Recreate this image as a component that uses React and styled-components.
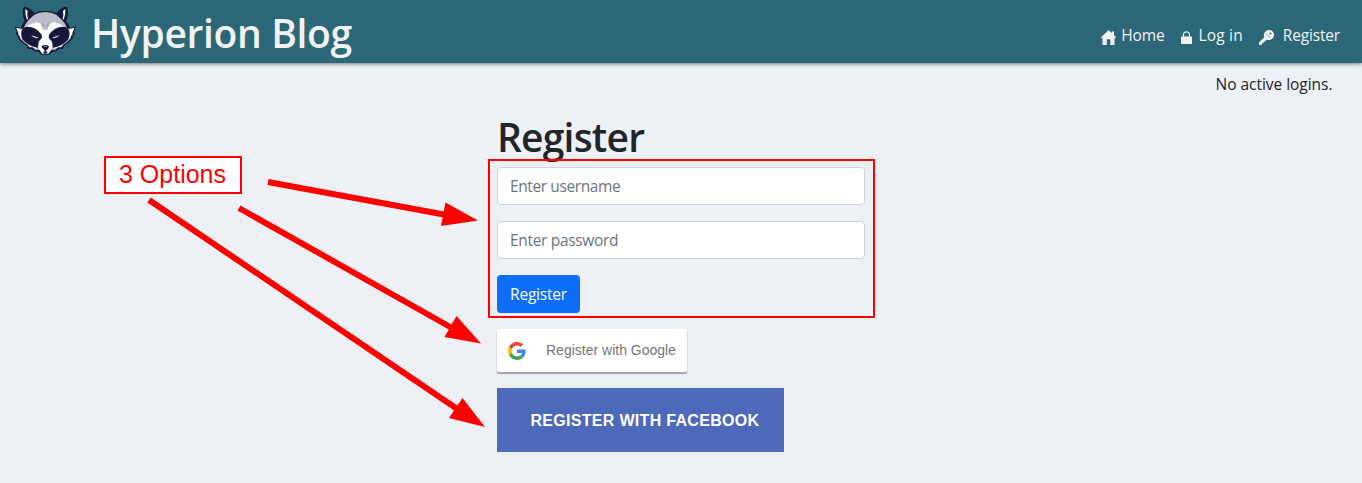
import React from "react";
import styled, { createGlobalStyle } from "styled-components";

const GlobalStyle = createGlobalStyle`
  *, *::before, *::after { box-sizing: border-box; }
  body {
    margin: 0;
    background: #edf0f5;
    color: #212529;
    font-family: "Segoe UI", "Open Sans", "Noto Sans", sans-serif;
    font-size: 15.5px;
    line-height: 24px;
    overflow: hidden;
  }
`;

const Page = styled.div`
  position: relative;
  height: 483px;
`;

const Header = styled.header`
  display: flex;
  align-items: flex-start;
  height: 63px;
  padding-left: 15px;
  background: #2b6777;
  color: #f2f2f2;
  box-shadow: 0 1px 4px rgba(0, 0, 0, 0.5);
`;

const Logo = styled.svg`
  width: 61px;
  height: 49px;
  margin-top: 6px;
`;

const Brand = styled.h1`
  margin: 9px 0 0 15px;
  font-size: 39px;
  font-weight: 600;
  line-height: 48px;
  letter-spacing: -0.35px;
  white-space: nowrap;
`;

const Nav = styled.nav`
  display: flex;
  margin: 23px 22px 0 auto;
`;

const NavLink = styled.a`
  display: flex;
  align-items: center;
  gap: ${(p) => p.$gap}px;
  margin-left: 16px;
  color: #f2f2f2;
  letter-spacing: ${(p) => p.$tracking}px;
  white-space: nowrap;

  svg { flex: none; margin-top: 5px; }
`;

const Status = styled.p`
  margin: 9px 29.5px 0 0;
  text-align: right;
  letter-spacing: -0.03px;
`;

const Main = styled.main`
  width: 368px;
  margin: 17px 0 0 497px;
`;

const Title = styled.h1`
  margin: 0 0 6px;
  font-size: 39px;
  font-weight: 600;
  line-height: 48px;
  letter-spacing: -0.8px;
`;

const Form = styled.form`
  display: flex;
  flex-direction: column;
  align-items: flex-start;
  gap: 16px;
`;

const Input = styled.input`
  width: 100%;
  height: 38px;
  padding: 6px 12px;
  border: 1px solid #ced4da;
  border-radius: 4px;
  background: #fff;
  font: inherit;
  letter-spacing: ${(p) => p.$tracking}px;

  &::placeholder { color: #6c757d; opacity: 1; }
`;

const SubmitButton = styled.button`
  width: 83px;
  height: 38px;
  padding: 0;
  border: 0;
  border-radius: 4px;
  background: #0d6efd;
  color: #fff;
  font: inherit;
  letter-spacing: -0.2px;
`;

const GoogleButton = styled.button`
  display: flex;
  align-items: center;
  gap: 20px;
  width: 190px;
  height: 43px;
  margin-top: 16px;
  padding: 0 0 0 11px;
  border: 0;
  border-radius: 2px;
  background: #fff;
  box-shadow: 0 1px 1px 1px rgba(0, 0, 0, 0.06), 0 2px 1px rgba(0, 0, 0, 0.28);
  color: #757575;
  font: 14px "Liberation Sans", Arial, sans-serif;
  white-space: nowrap;

  span { padding-bottom: 2px; }
`;

const FacebookButton = styled.button`
  display: block;
  width: 287px;
  height: 64px;
  margin-top: 16px;
  padding: 2px 0 0 33.5px;
  border: 0;
  background: #4c69ba;
  color: #fff;
  font: bold 16px "Liberation Sans", Arial, sans-serif;
  letter-spacing: 0.3px;
  text-align: left;
  white-space: nowrap;
`;

const Highlight = styled.div`
  position: absolute;
  left: 488px;
  top: 159px;
  width: 387px;
  height: 159px;
  border: 2px solid #f00;
  pointer-events: none;
`;

const Callout = styled.div`
  position: absolute;
  left: 104px;
  top: 156px;
  width: 138px;
  height: 38px;
  padding-right: 1px;
  border: 2px solid #f00;
  background: #fff;
  color: #f00;
  font: 25px/32px "Liberation Sans", Arial, sans-serif;
  text-align: center;
`;

const Arrows = styled.svg`
  position: absolute;
  left: 0;
  top: 0;
  pointer-events: none;
`;

const arrows = [
  { from: [268, 182], to: [444, 214.5], head: "478,220.5 445.5,202.5 441,226" },
  { from: [239, 208], to: [452, 328], head: "481,343.5 456.5,316 444.5,337" },
  { from: [149, 200], to: [458, 409.5], head: "485,427 462.5,398 449,418" },
];

const FaceHalf = () => (
  <>
    <path fill="#17173a" d="M137 33Q118 32 103 39Q97 29 84 23Q71 17 69 26Q66 46 74 64Q65 73 62 84L45 80Q46 91 51 97L46 100L55 110L53 114Q64 129 79 137L84 147L95 147L103 154L115 155L124 164H137Z" />
    <path fill="#bcbccb" d="M137 36Q117 36 103 44L85 61Q74 73 70 86L49 84Q52 93 56 99L53 102L60 110L59 114Q69 127 83 134L88 142L97 142L106 149L118 150L137 152Z" />
    <path fill="#fff" d="M49 84L63 89Q60 103 66 117Q78 135 106 142L111 148L98 141L88 140L80 130Q67 121 61 112L57 102Z" />
    <path fill="#17173a" d="M81 35Q92 38 96 45L84 57Q79 46 81 35Z" />
    <path fill="#fff" d="M76 28Q81 30 83 34Q80 46 84 56L81 59Q74 43 76 28Z" />
    <path fill="#fff" d="M78 84Q85 70 106 69L106 65L121 70L131 92L137 88V160L127 161L119 151L115 133L124 116L118 100Q98 78 78 84Z" />
    <path fill="#17173a" d="M64 98Q65 81 82 80Q109 80 125 104L126 113L116 124L113 143Q87 138 71 122Q63 113 64 98Z" />
    <path fill="#e2e2ea" d="M93 105L99 107L116 113Q103 118 93 105Z" />
    <path fill="#8d8da0" d="M124 61L133 82L128 77Z" />
  </>
);

const Raccoon = () => (
  <Logo viewBox="45 18 183 147">
    <FaceHalf />
    <g transform="translate(272 0) scale(-1 1)">
      <FaceHalf />
    </g>
    <path fill="#17173a" d="M125 139Q136 131 147 139Q147 147 139 150L138 154L144 157L136 160L128 157L134 154L133 150Q125 146 125 139Z" />
    <path fill="#9898aa" d="M130 139Q136 136 142 139L137 142Z" />
  </Logo>
);

const HomeIcon = () => (
  <svg width="15" height="15" viewBox="0 0 15 15" fill="#f2f2f2">
    <path d="M7.5 0.3L10.8 3V1.5H13V5L15 7.3L14.2 8.4L13.5 7.9V15H9.3V9.3H5.8V15H1.5V7.9L0.8 8.4L0 7.3Z" />
  </svg>
);

const LockIcon = () => (
  <svg width="11" height="13" viewBox="0 0 11 13">
    <path d="M2.5 6V4Q2.5 0.8 5.5 0.8T8.5 4V6" fill="none" stroke="#f2f2f2" strokeWidth="1.2" />
    <rect y="5.5" width="11" height="7.5" rx="0.8" fill="#f2f2f2" />
  </svg>
);

const KeyIcon = () => (
  <svg width="15" height="15" viewBox="0 0 15 15">
    <path fill="#f2f2f2" d="M10 0A5 5 0 1 1 8.3 9.7L6.8 10L6.5 11.4L4.8 11.6L4.4 13.2L2.9 13.5L2.5 15H0V12.6L5.3 6.9A5 5 0 0 1 10 0Z" />
    <circle cx="11.5" cy="3.5" r="1" fill="#2b6777" />
    <path d="M6.7 3.2L11.3 7.9" stroke="#2b6777" strokeWidth="0.5" />
  </svg>
);

const GoogleIcon = () => (
  <svg width="18" height="18" viewBox="0 0 48 48">
    <path fill="#EA4335" d="M24 9.5c3.54 0 6.71 1.22 9.21 3.6l6.85-6.85C35.9 2.38 30.47 0 24 0 14.62 0 6.51 5.38 2.56 13.22l7.98 6.19C12.43 13.72 17.74 9.5 24 9.5z" />
    <path fill="#4285F4" d="M46.98 24.55c0-1.57-.15-3.09-.38-4.55H24v9.02h12.94c-.58 2.96-2.26 5.48-4.78 7.18l7.73 6c4.51-4.18 7.09-10.36 7.09-17.65z" />
    <path fill="#FBBC05" d="M10.53 28.59c-.48-1.45-.76-2.99-.76-4.59s.27-3.14.76-4.59l-7.98-6.19C.92 16.46 0 20.12 0 24c0 3.88.92 7.54 2.56 10.78l7.97-6.19z" />
    <path fill="#34A853" d="M24 48c6.48 0 11.93-2.13 15.89-5.81l-7.73-6c-2.15 1.45-4.92 2.3-8.16 2.3-6.26 0-11.57-4.22-13.47-9.91l-7.98 6.19C6.51 42.62 14.62 48 24 48z" />
  </svg>
);

export default function App() {
  return (
    <Page>
      <GlobalStyle />
      <Header>
        <Raccoon />
        <Brand>Hyperion Blog</Brand>
        <Nav>
          <NavLink $gap={5} $tracking={-0.1}><HomeIcon />Home</NavLink>
          <NavLink $gap={7} $tracking={0.15}><LockIcon />Log in</NavLink>
          <NavLink $gap={9} $tracking={-0.17}><KeyIcon />Register</NavLink>
        </Nav>
      </Header>
      <Status>No active logins.</Status>
      <Main>
        <Title>Register</Title>
        <Form>
          <Input placeholder="Enter username" $tracking={-0.4} />
          <Input type="password" placeholder="Enter password" $tracking={-0.33} />
          <SubmitButton type="button">Register</SubmitButton>
        </Form>
        <GoogleButton><GoogleIcon /><span>Register with Google</span></GoogleButton>
        <FacebookButton>REGISTER WITH FACEBOOK</FacebookButton>
      </Main>
      <Highlight />
      <Callout>3 Options</Callout>
      <Arrows width="500" height="483">
        {arrows.map(({ from, to, head }) => (
          <g key={head}>
            <line x1={from[0]} y1={from[1]} x2={to[0]} y2={to[1]} stroke="#f00" strokeWidth="6" />
            <polygon points={head} fill="#f00" />
          </g>
        ))}
      </Arrows>
    </Page>
  );
}
